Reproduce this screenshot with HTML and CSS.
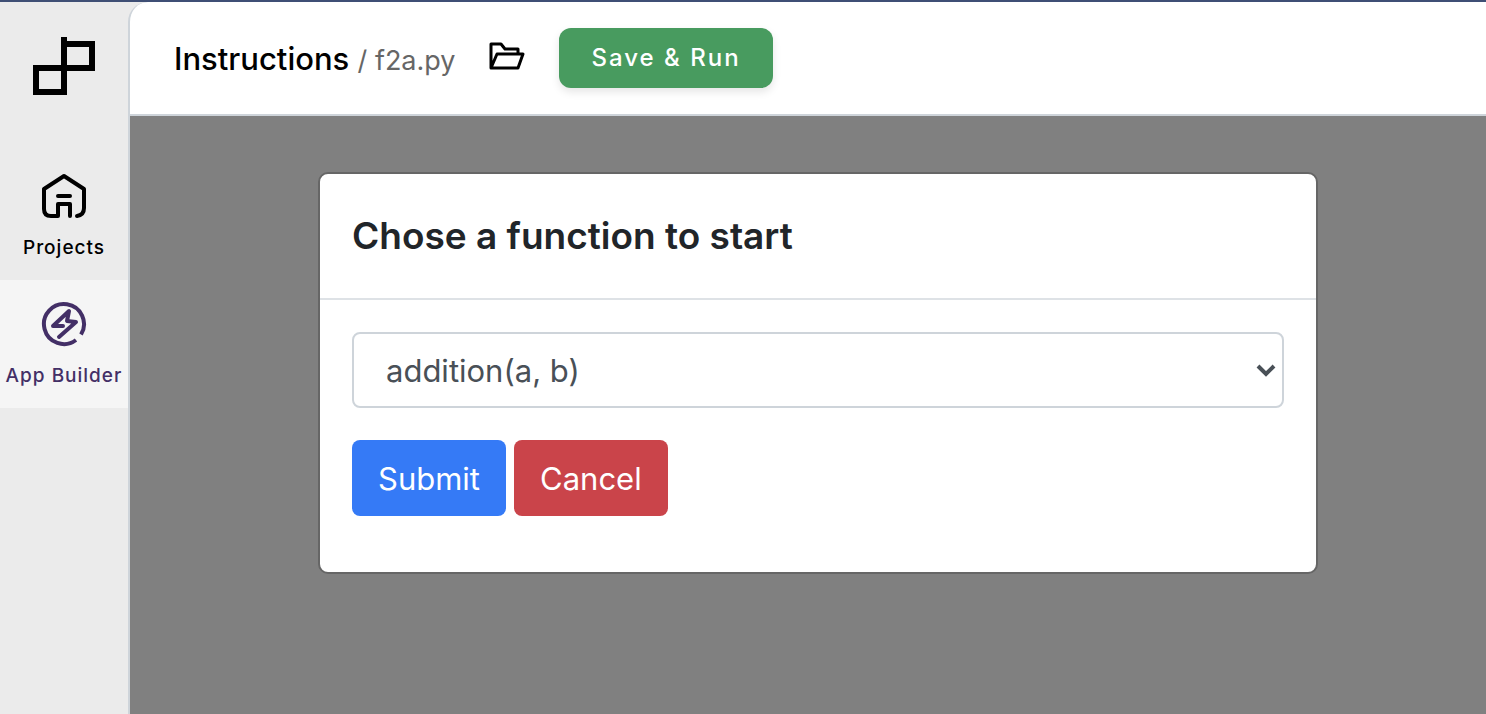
FILE: index.html
```html
<!DOCTYPE html>
<html lang="en">
<head>
<meta charset="utf-8">
<title>App Builder</title>
<link rel="stylesheet" href="styles.css">
</head>
<body>
<div class="app">
  <nav class="sidebar">
    <a class="logo" href="#" aria-label="Home">
      <svg width="62" height="58" viewBox="0 0 62 58" fill="none" stroke="#000" stroke-width="6"><path d="M31 0V55H3V31H59V7H31"/></svg>
    </a>
    <a class="nav-item" href="#">
      <svg width="48" height="48" viewBox="0 0 48 48" fill="none" stroke="currentColor" stroke-width="4" stroke-linecap="round" stroke-linejoin="round"><path d="M37 44Q44 43 44 36V17L24 4L4 17V37Q4 44 11 44H18V32H30V44M18 24H30"/></svg>
      <span>Projects</span>
    </a>
    <a class="nav-item active" href="#">
      <svg width="48" height="48" viewBox="0 0 48 48" fill="none" stroke="currentColor" stroke-width="4" stroke-linecap="round" stroke-linejoin="round"><path d="M36 40A20 20 0 1 1 41 34.5" stroke-linecap="butt"/><path d="M23 26H13L29 11L27 21L36 22L19 37"/></svg>
      <span>App Builder</span>
    </a>
  </nav>
  <main class="main">
    <header class="topbar">
      <h1 class="crumbs">Instructions <span class="file">/ f2a.py</span></h1>
      <button class="open" type="button" aria-label="Open file">
        <svg width="36" height="32" viewBox="0 0 36 32" fill="none" stroke="#000" stroke-width="3" stroke-linejoin="round"><path d="M2 26V2H12L16 7H29V12M2 26L8 12H34L29 26Z"/></svg>
      </button>
      <button class="run" type="button">Save &amp; Run</button>
    </header>
    <div class="backdrop">
      <section class="modal" role="dialog" aria-labelledby="title">
        <h2 class="modal-title" id="title">Chose a function to start</h2>
        <form class="modal-body">
          <div class="select-wrap">
            <select class="select" aria-label="Function"><option>addition(a, b)</option></select>
            <svg class="chevron" width="20" height="14" viewBox="0 0 20 14" fill="none" stroke="#495057" stroke-width="4"><path d="M2 2L10 10L18 2"/></svg>
          </div>
          <div class="actions">
            <button class="btn submit" type="button">Submit</button>
            <button class="btn cancel" type="button">Cancel</button>
          </div>
        </form>
      </section>
    </div>
  </main>
</div>
</body>
</html>
```
FILE: styles.css
```css
* { box-sizing: border-box; }
body { margin: 0; font-family: Inter, sans-serif; color: #212529; }
button, select { font-family: inherit; }
svg { display: block; }
.app { display: flex; min-height: 100vh; border-top: 2px solid #3f4f75; background: #ebebeb; }
.sidebar { flex: 0 0 128px; }
.logo { display: block; padding: 35px 0 57px 33px; }
.nav-item { display: flex; flex-direction: column; align-items: center; gap: 16px; height: 128px; padding-top: 20px; color: #000; text-decoration: none; font-size: 19px; line-height: 24px; font-weight: 500; letter-spacing: 1px; white-space: nowrap; }
.nav-item.active { background: #f5f5f5; color: #432f66; }
.main { flex: 1; min-width: 0; display: flex; flex-direction: column; border-left: 2px solid #ced4da; border-top-left-radius: 20px; overflow: hidden; background: #fff; }
.topbar { display: flex; align-items: center; height: 114px; padding-left: 44px; border-bottom: 2px solid #ced4da; }
.crumbs { margin: 0; padding-top: 4px; font-size: 31px; line-height: 40px; font-weight: 500; color: #000; white-space: nowrap; }
.file { font-size: 27px; font-weight: 400; color: #666; }
.open { margin-left: 34px; padding: 0; border: 0; background: none; }
.run { height: 60px; margin-left: 34px; padding: 0 32px 2px; border: 0; border-radius: 12px; background: #489b5f; color: #fff; font-size: 24px; font-weight: 500; letter-spacing: 2px; box-shadow: 0 4px 8px rgba(0, 0, 0, 0.1); white-space: nowrap; }
.backdrop { flex: 1; padding: 56px 168px 56px 188px; background: #808080; }
.modal { background: #fff; border: 2px solid #666; border-radius: 10px; }
.modal-title { margin: 0; padding: 32px; font-size: 37px; line-height: 60px; font-weight: 600; border-bottom: 2px solid #dee2e6; }
.modal-body { padding: 32px 32px 56px; }
.select-wrap { position: relative; }
.select { display: block; width: 100%; height: 76px; padding: 0 32px; appearance: none; border: 2px solid #ced4da; border-radius: 8px; background: #fff; color: #495057; font-size: 31px; }
.chevron { position: absolute; right: 8px; top: 32px; pointer-events: none; }
.actions { display: flex; gap: 8px; margin-top: 32px; }
.btn { height: 76px; padding: 0 26px; border: 0; border-radius: 8px; color: #fff; font-size: 31px; }
.submit { background: #357af6; }
.cancel { background: #ca444a; }
```
